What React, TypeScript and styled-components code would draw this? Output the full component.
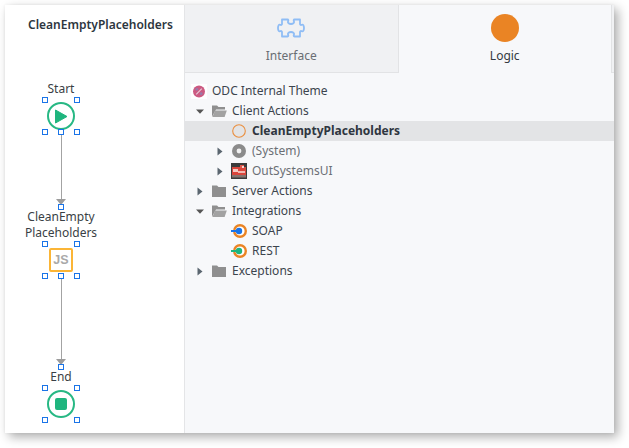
import React from "react";
import styled, { createGlobalStyle } from "styled-components";

const Global = createGlobalStyle`
  html, body { margin: 0; padding: 0; background: #fff; }
  body { font-family: "Noto Sans", "Open Sans", sans-serif; font-size: 12px; }
`;

const Page = styled.div`
  width: 629px;
  height: 448px;
  padding: 5px 15px 15px 5px;
  box-sizing: border-box;
  overflow: hidden;
`;
const Window = styled.div`
  display: flex;
  width: 609px;
  height: 428px;
  background: #fff;
  box-shadow: 4px 4px 10px rgba(0, 0, 0, 0.32), 0 0 3px rgba(0, 0, 0, 0.06);
`;
const Canvas = styled.div`
  position: relative;
  flex: none;
  width: 180px;
  box-sizing: border-box;
  border-right: 1px solid #e4e5e7;
  background: #fff;
`;
const Title = styled.div`
  padding: 11px 0 0 23px;
  line-height: 18px;
  font-weight: 600;
  font-size: 12px;
  color: #2d3640;
  white-space: nowrap;
`;
const NodeLabel = styled.div<{ $y: number }>`
  position: absolute;
  left: 0;
  top: ${(p) => p.$y}px;
  width: 112px;
  text-align: center;
  line-height: 16px;
  color: #3a3f45;
`;
const Handle = styled.span<{ $x: number; $y: number }>`
  position: absolute;
  left: ${(p) => p.$x - 3}px;
  top: ${(p) => p.$y - 3}px;
  width: 6px;
  height: 6px;
  box-sizing: border-box;
  border: 1px solid #1a74e8;
  background: #fff;
  z-index: 2;
`;
const Connector = styled.div<{ $y: number; $h: number }>`
  position: absolute;
  left: 56px;
  top: ${(p) => p.$y}px;
  width: 1px;
  height: ${(p) => p.$h}px;
  background: #a3a3a3;
`;
const ArrowHead = styled.div<{ $y: number }>`
  position: absolute;
  left: 51px;
  top: ${(p) => p.$y}px;
  width: 0;
  height: 0;
  border-left: 5.5px solid transparent;
  border-right: 5.5px solid transparent;
  border-top: 6px solid #9c9c9c;
`;
const Terminal = styled.div<{ $y: number }>`
  position: absolute;
  left: 42px;
  top: ${(p) => p.$y}px;
  width: 28px;
  height: 28px;
  box-sizing: border-box;
  border: 2px solid #27b884;
  border-radius: 50%;
  background: #fff;
  display: flex;
  align-items: center;
  justify-content: center;
`;
const StopSquare = styled.div`
  width: 12px;
  height: 12px;
  border-radius: 2px;
  background: #1fb57e;
`;
const JsBox = styled.div<{ $y: number }>`
  position: absolute;
  left: 44px;
  top: ${(p) => p.$y}px;
  width: 24px;
  height: 24px;
  box-sizing: border-box;
  border: 2px solid #fbb536;
  border-radius: 2px;
  background: #fff;
  display: flex;
  align-items: center;
  justify-content: center;
  font-family: "Liberation Sans", Arial, sans-serif;
  font-size: 12.5px;
  font-weight: 700;
  color: #a9a9a9;
`;

const Side = styled.div`
  flex: 1;
  min-width: 0;
  display: flex;
  flex-direction: column;
  background: #f7f8fa;
`;
const Tabs = styled.div`
  display: flex;
  flex: none;
  height: 68px;
  box-sizing: border-box;
  padding-right: 2px;
  background: #f0f1f3;
  border-bottom: 1px solid #e2e3e5;
`;
const Tab = styled.div<{ $active?: boolean }>`
  flex: 1;
  display: flex;
  flex-direction: column;
  align-items: center;
  box-sizing: border-box;
  padding-top: 9px;
  margin-bottom: ${(p) => (p.$active ? "-1px" : "0")};
  background: ${(p) => (p.$active ? "#f7f8fa" : "#f0f1f3")};
  border-right: 1px solid #e2e3e5;
  color: ${(p) => (p.$active ? "#333a42" : "#6a6e73")};
`;
const TabIcon = styled.div`
  width: 28px;
  height: 28px;
  display: flex;
  align-items: center;
  justify-content: center;
`;
const TabLabel = styled.div`
  margin-top: 5px;
  line-height: 18px;
  font-size: 12px;
`;
const OrangeDot = styled.div`
  width: 28px;
  height: 28px;
  border-radius: 50%;
  background: #ea8424;
`;
const Tree = styled.div`
  padding-top: 8px;
  display: flex;
  flex-direction: column;
`;
const Row = styled.div<{ $indent: number; $selected?: boolean }>`
  display: flex;
  align-items: center;
  height: 20px;
  padding-left: ${(p) => p.$indent}px;
  background: ${(p) => (p.$selected ? "#e3e4e6" : "transparent")};
  white-space: nowrap;
`;
const Twisty = styled.span`
  flex: none;
  width: 16px;
  height: 20px;
  margin-right: 4px;
  display: flex;
  align-items: center;
  justify-content: center;
`;
const IconSlot = styled.span`
  flex: none;
  width: 14px;
  height: 16px;
  margin-right: 6px;
  display: flex;
  align-items: center;
  justify-content: center;
  & > svg {
    flex: none;
  }
`;
const RowText = styled.span<{ $strong?: boolean; $muted?: boolean }>`
  font-size: 12px;
  line-height: 20px;
  font-weight: ${(p) => (p.$strong ? 700 : 400)};
  color: ${(p) => (p.$muted ? "#6b6f75" : p.$strong ? "#2f3640" : "#3c444d")};
`;

const Play = () => (
  <svg width="14" height="15" viewBox="0 0 14 15">
    <path d="M1.5 1 L13 7.5 L1.5 14 Z" fill="#1fb57e" stroke="#1fb57e" strokeLinejoin="round" />
  </svg>
);
const Puzzle = () => (
  <svg width="28" height="20" viewBox="0 0 28 20" fill="none">
    <path
      d="M5 1.5 H10.5 C11.5 1.5 11.5 2.5 11 3.5 C10.5 5 12 6 14 6 C16 6 17.5 5 17 3.5 C16.5 2.5 16.5 1.5 17.5 1.5 H23 V6 C23 7 24 7.2 24.8 6.8 C26 6.2 27 7.5 27 10 C27 12.5 26 13.8 24.8 13.2 C24 12.8 23 13 23 14 V18.5 H17.5 C16.5 18.5 16.5 17.5 17 16.5 C17.5 15 16 14 14 14 C12 14 10.5 15 11 16.5 C11.5 17.5 11.5 18.5 10.5 18.5 H5 V14 C5 13 4 12.8 3.2 13.2 C2 13.8 1 12.5 1 10 C1 7.5 2 6.2 3.2 6.8 C4 7.2 5 7 5 6 Z"
      stroke="#8fbdf5"
      strokeWidth="1.8"
      strokeLinejoin="round"
    />
  </svg>
);
const ArrowRight = () => (
  <svg width="6" height="9" viewBox="0 0 6 9">
    <path d="M0.5 0.5 L5.5 4.5 L0.5 8.5 Z" fill="#5b6670" />
  </svg>
);
const ArrowDown = () => (
  <svg width="8" height="5" viewBox="0 0 8 5">
    <path d="M0 0.5 H8 L4 4.8 Z" fill="#555" />
  </svg>
);
const FolderClosed = () => (
  <svg width="16" height="14" viewBox="0 0 16 14">
    <path d="M1 1.5 H6 L7.5 3 H15 V13 H1 Z" fill="#8f8f8f" />
  </svg>
);
const FolderOpen = () => (
  <svg width="16" height="14" viewBox="0 0 16 14">
    <path d="M1 12.8 V1.5 H6 L7.5 3 H14 V5.5 H5 Z" fill="#8f8f8f" />
    <path d="M4 6.5 H15.8 L13.6 13 H1.4 Z" fill="#a2a2a2" />
  </svg>
);
const ThemeIcon = () => (
  <svg width="16" height="15" viewBox="0 0 16 15">
    <rect width="16" height="15" fill="#fff" />
    <circle cx="8" cy="7.5" r="6" fill="#cc5a82" />
    <path d="M5.2 10.3 L10.8 4.7" stroke="#e6c8d6" strokeWidth="1.2" />
    <circle cx="5.8" cy="5.3" r="1.4" fill="#9a7aa8" />
    <circle cx="10.2" cy="9.7" r="1.4" fill="#9a7aa8" />
  </svg>
);
const ActionRing = () => (
  <svg width="14" height="14" viewBox="0 0 14 14">
    <circle cx="7" cy="7" r="6.3" fill="none" stroke="#ea8e3d" strokeWidth="1.1" />
  </svg>
);
const SystemIcon = () => (
  <svg width="14" height="14" viewBox="0 0 14 14">
    <circle cx="7" cy="7" r="7" fill="#8b8b8b" />
    <circle cx="7" cy="7" r="2.4" fill="#f1f1f1" />
  </svg>
);
const ModuleIcon = () => (
  <svg width="16" height="16" viewBox="0 0 16 16">
    <rect width="16" height="16" fill="#3b3b3b" />
    <rect x="1" y="4" width="14" height="8" fill="#d9453b" />
    <rect x="9" y="2" width="4" height="3" fill="#e0584c" />
    <rect x="2" y="6" width="5" height="3" fill="#f4c9c2" />
    <rect x="7" y="8" width="7" height="2" fill="#f2b8b0" />
    <rect x="11" y="3" width="2" height="2" fill="#f6d6d0" />
    <rect x="1" y="12" width="14" height="2.5" fill="#857570" />
  </svg>
);
const Service = ({ color }: { color: string }) => (
  <svg width="16" height="14" viewBox="0 0 16 14">
    <circle cx="9" cy="7" r="5.8" fill="#fff" stroke="#ea8424" strokeWidth="2.4" />
    <circle cx="8" cy="7" r="3.2" fill={color} />
    <rect x="0" y="6" width="7" height="2" fill={color} />
  </svg>
);

type Item = {
  label: string;
  indent: number;
  twisty?: "open" | "closed";
  icon: React.ReactNode;
  strong?: boolean;
  muted?: boolean;
  selected?: boolean;
};

const items: Item[] = [
  { label: "ODC Internal Theme", indent: 7, icon: <ThemeIcon /> },
  { label: "Client Actions", indent: 7, twisty: "open", icon: <FolderOpen /> },
  { label: "CleanEmptyPlaceholders", indent: 47, icon: <ActionRing />, strong: true, selected: true },
  { label: "(System)", indent: 27, twisty: "closed", icon: <SystemIcon />, muted: true },
  { label: "OutSystemsUI", indent: 27, twisty: "closed", icon: <ModuleIcon />, muted: true },
  { label: "Server Actions", indent: 7, twisty: "closed", icon: <FolderClosed /> },
  { label: "Integrations", indent: 7, twisty: "open", icon: <FolderOpen /> },
  { label: "SOAP", indent: 47, icon: <Service color="#1a74e8" /> },
  { label: "REST", indent: 47, icon: <Service color="#1fb57e" /> },
  { label: "Exceptions", indent: 7, twisty: "closed", icon: <FolderClosed /> },
];

const handles = [
  [40, 95], [72, 95], [40, 127], [56, 127], [72, 127],
  [56, 202],
  [40, 239], [72, 239], [40, 271], [56, 271], [72, 271],
  [56, 362],
  [40, 383], [72, 383], [40, 415], [72, 415],
];

export default function App() {
  return (
    <Page>
      <Global />
      <Window>
        <Canvas>
          <Title>CleanEmptyPlaceholders</Title>
          <NodeLabel $y={76}>Start</NodeLabel>
          <Terminal $y={97}>
            <Play />
          </Terminal>
          <Connector $y={127} $h={68} />
          <ArrowHead $y={194} />
          <NodeLabel $y={204}>
            CleanEmpty
            <br />
            Placeholders
          </NodeLabel>
          <JsBox $y={243}>JS</JsBox>
          <Connector $y={271} $h={84} />
          <ArrowHead $y={354} />
          <NodeLabel $y={364}>End</NodeLabel>
          <Terminal $y={385}>
            <StopSquare />
          </Terminal>
          {handles.map(([x, y]) => (
            <Handle key={`${x}-${y}`} $x={x} $y={y} />
          ))}
        </Canvas>
        <Side>
          <Tabs>
            <Tab>
              <TabIcon>
                <Puzzle />
              </TabIcon>
              <TabLabel>Interface</TabLabel>
            </Tab>
            <Tab $active>
              <TabIcon>
                <OrangeDot />
              </TabIcon>
              <TabLabel>Logic</TabLabel>
            </Tab>
          </Tabs>
          <Tree>
            {items.map((it) => (
              <Row key={it.label} $indent={it.indent} $selected={it.selected}>
                {it.twisty && <Twisty>{it.twisty === "open" ? <ArrowDown /> : <ArrowRight />}</Twisty>}
                <IconSlot>{it.icon}</IconSlot>
                <RowText $strong={it.strong} $muted={it.muted}>
                  {it.label}
                </RowText>
              </Row>
            ))}
          </Tree>
        </Side>
      </Window>
    </Page>
  );
}
